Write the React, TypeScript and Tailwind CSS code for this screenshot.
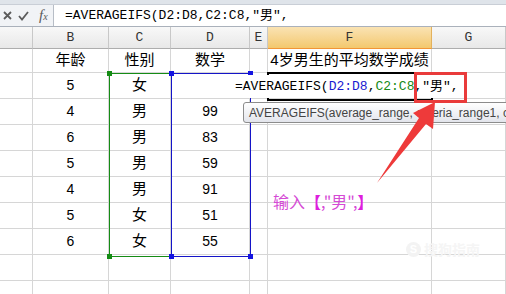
import React from "react";

// column A is scrolled half out of view, so its header shows no letter
const COLS = ["", "B", "C", "D", "E", "F", "G"];

// rows of the sheet, one entry per column A..G
const ROWS: string[][] = [
  ["", "年龄", "性别", "数学", "", "4岁男生的平均数学成绩", ""],
  ["", "5", "女", "", "", "", ""],
  ["", "4", "男", "99", "", "", ""],
  ["", "6", "男", "83", "", "", ""],
  ["", "5", "男", "59", "", "", ""],
  ["", "4", "男", "91", "", "", ""],
  ["", "5", "女", "51", "", "", ""],
  ["", "6", "女", "55", "", "", ""],
  ["", "", "", "", "", "", ""],
  ["", "", "", "", "", "", ""],
];

const mono = "font-['Liberation_Mono','Noto_Sans_CJK_SC',monospace]";
const cjk = "font-['Liberation_Sans','Noto_Sans_CJK_SC',sans-serif]";

function Range({ className, color }: { className: string; color: string }) {
  // highlighted reference range with its little corner handles
  return (
    <div className={`absolute border ${className}`}>
      <div className={`absolute -left-[3px] -top-[3px] h-[5px] w-[5px] ${color}`} />
      <div className={`absolute -right-[3px] -top-[3px] h-[5px] w-[5px] ${color}`} />
      <div className={`absolute -bottom-[3px] -left-[3px] h-[5px] w-[5px] ${color}`} />
      <div className={`absolute -bottom-[3px] -right-[3px] h-[5px] w-[5px] ${color}`} />
    </div>
  );
}

function FormulaText() {
  return (
    <>
      <span>=AVERAGEIFS(</span>
      <span className="text-[#1a1ad0]">D2:D8</span>
      <span>,</span>
      <span className="text-[#168a16]">C2:C8</span>
      <span>,"男",</span>
    </>
  );
}

export default function App() {
  return (
    <div className="relative h-[294px] w-[506px] overflow-hidden bg-white">
      {/* formula bar */}
      <div className="h-[5px] border-b border-[#c9ced6] bg-[#dfe4ea]" />
      <div className="flex h-[22px] border-b border-[#aab1bb]">
        <div className="flex w-[53px] items-center bg-[#f1f3f6] pl-[3px] text-[#5a5a5a]">
          <svg width="9" height="9" viewBox="0 0 9 9" className="mr-[6px]">
            <path d="M1 1 L8 8 M8 1 L1 8" stroke="#5c5c5c" strokeWidth="1.8" />
          </svg>
          <svg width="11" height="10" viewBox="0 0 11 10" className="mr-[10px]">
            <path d="M1 5 L4 8.5 L10 1" stroke="#5c5c5c" strokeWidth="1.8" fill="none" />
          </svg>
          <span className="font-['Liberation_Serif',serif] text-[15px] italic leading-none">
            f<span className="text-[10px]">x</span>
          </span>
        </div>
        <div
          className={`flex flex-1 items-center border-l border-[#b7bdc6] bg-white pl-[11px] text-[13px] text-black ${mono}`}
        >
          =AVERAGEIFS(D2:D8,C2:C8,"男",
        </div>
      </div>

      {/* sheet */}
      <div className="grid grid-cols-[33px_76px_62px_79px_18px_164px_74px] grid-rows-[22px_24px_repeat(9,26px)]">
        {COLS.map((c, i) =>
          c === "F" ? (
            <div
              key={i}
              className={`flex items-center justify-center border-r border-b border-r-[#e3b15c] border-b-[#f29536] bg-linear-to-b from-[#fae3b3] to-[#f3c86d] text-[13px] text-[#333] ${mono}`}
            >
              {c}
            </div>
          ) : (
            <div
              key={i}
              className={`flex items-center justify-center border-r border-b border-r-[#c8c8c8] border-b-[#adadad] bg-linear-to-b from-[#f8f8f8] to-[#e8e8e8] text-[13px] text-[#333] ${mono}`}
            >
              {c}
            </div>
          )
        )}
        {ROWS.map((row, r) =>
          row.map((v, c) => (
            <div
              key={`${r}-${c}`}
              className={`flex items-center justify-center border-r border-b border-[#d6d6d6] text-black ${
                /^\d+$/.test(v) ? "font-['Liberation_Sans',sans-serif] text-[14px]" : `${cjk} text-[15px]`
              }`}
            >
              {v}
            </div>
          ))
        )}
      </div>

      {/* reference ranges C2:C8 and D2:D8 */}
      <Range className="left-[109px] top-[73px] h-[184px] w-[63px] border-[#158c15]" color="bg-[#158c15]" />
      <Range className="left-[171px] top-[73px] h-[184px] w-[80px] border-[#1414c8]" color="bg-[#1414e0]" />

      {/* active cell F2 in edit mode */}
      <div className="absolute left-[267px] top-[72px] h-[29px] w-[166px] border-2 border-black" />
      <div
        className={`absolute left-[232px] top-[75px] flex h-[23px] w-[238px] items-center bg-white pl-[3px] text-[13px] text-black ${mono}`}
      >
        <FormulaText />
      </div>

      {/* function tooltip */}
      <div className="absolute left-[243px] top-[102px] flex h-[21px] w-[300px] items-center rounded-[3px] border border-[#8c8c8c] bg-linear-to-b from-white to-[#e3e5ec] pl-[5px] font-['Liberation_Sans',sans-serif] text-[12px] whitespace-nowrap text-[#444]">
        AVERAGEIFS(average_range, criteria_range1, criteria1, ...)
      </div>

      {/* annotation */}
      <div className="absolute left-[414px] top-[72px] h-[31px] w-[53px] border-[3px] border-[#e93b3b]" />
      <svg className="absolute left-0 top-0" width="506" height="294">
        <polygon
          points="377,183 419,118 413,113 435,102 433,129 426,124"
          fill="#ee3a3a"
        />
      </svg>
      <div className="absolute left-[273px] top-[190px] font-['Noto_Sans_CJK_SC',sans-serif] text-[16px] leading-[22px] whitespace-nowrap text-[#d54ad5]">
        输入<span className="font-bold text-[#de1fde]">【</span>,"男",
        <span className="font-bold text-[#de1fde]">】</span>
      </div>

      {/* faint watermark */}
      <div className="absolute left-[406px] top-[239px] flex items-center gap-[3px] text-[#f5f5f5]">
        <div className="flex h-[15px] w-[15px] items-center justify-center rounded-full bg-[#f3f3f3] font-['Liberation_Sans',sans-serif] text-[11px] font-bold text-white">
          S
        </div>
        <span className="font-['Noto_Sans_CJK_SC',sans-serif] text-[14px] font-bold">搜狗指南</span>
      </div>
    </div>
  );
}
